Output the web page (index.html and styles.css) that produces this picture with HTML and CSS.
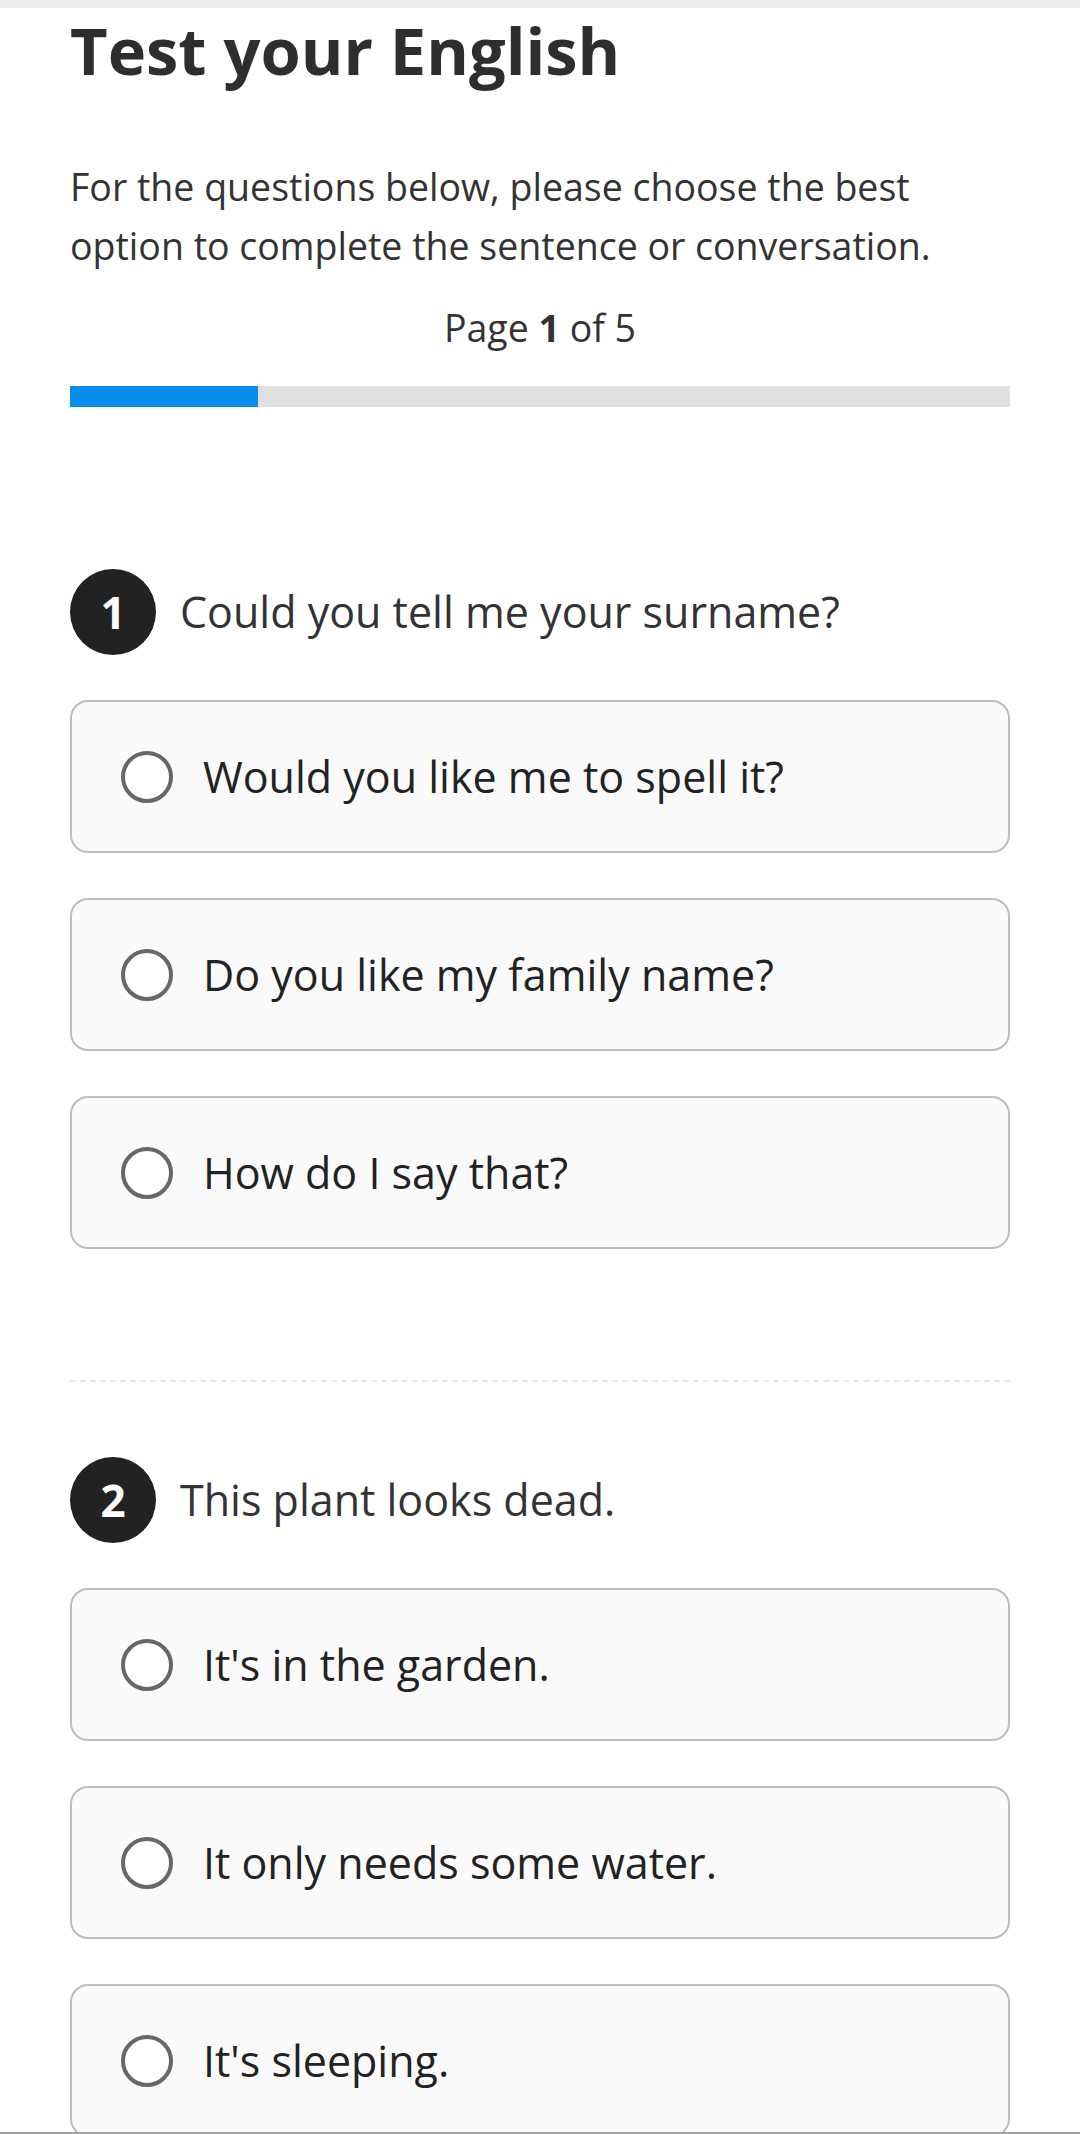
FILE: index.html
```html
<!DOCTYPE html>
<html lang="en">
<head>
<meta charset="utf-8">
<title>Test your English</title>
<link rel="stylesheet" href="styles.css">
</head>
<body>
<div class="topbar"></div>
<main class="page">
  <h1 class="title">Test your English</h1>
  <p class="intro">For the questions below, please choose the best option to complete the sentence or conversation.</p>
  <p class="pager">Page <b>1</b> of 5</p>
  <div class="progress"><div class="progress-fill" style="width:20%"></div></div>

  <section class="question q-first">
    <div class="q-head">
      <span class="q-num">1</span>
      <span class="q-text">Could you tell me your surname?</span>
    </div>
    <div class="options">
      <label class="option"><span class="radio"></span><span class="opt-text">Would you like me to spell it?</span></label>
      <label class="option"><span class="radio"></span><span class="opt-text">Do you like my family name?</span></label>
      <label class="option"><span class="radio"></span><span class="opt-text">How do I say that?</span></label>
    </div>
  </section>

  <hr class="divider">

  <section class="question q-second">
    <div class="q-head">
      <span class="q-num">2</span>
      <span class="q-text">This plant looks dead.</span>
    </div>
    <div class="options">
      <label class="option"><span class="radio"></span><span class="opt-text">It's in the garden.</span></label>
      <label class="option"><span class="radio"></span><span class="opt-text">It only needs some water.</span></label>
      <label class="option"><span class="radio"></span><span class="opt-text">It's sleeping.</span></label>
    </div>
  </section>
</main>
<div class="bottom-edge"></div>
</body>
</html>
```

FILE: styles.css
```css
* { box-sizing: border-box; }

html, body {
  margin: 0;
  padding: 0;
  background: #ffffff;
}

body {
  font-family: "Open Sans", "Noto Sans", "Liberation Sans", sans-serif;
  color: #333333;
}

.topbar {
  height: 8px;
  background: #ececec;
}

.page {
  padding: 0 70px;
}

.title {
  margin: 6px 0 0;
  font-size: 65px;
  line-height: 72px;
  font-weight: 700;
  color: #2e2e2e;
}

.intro {
  margin: 71px 0 0;
  font-size: 37.5px;
  line-height: 59px;
  color: #333333;
}

.pager {
  margin: 28px 0 0;
  font-size: 37.5px;
  line-height: 50px;
  text-align: center;
  color: #333333;
}

.pager b {
  font-weight: 700;
}

.progress {
  margin-top: 33px;
  height: 21px;
  background: #e0e0e0;
}

.progress-fill {
  height: 100%;
  background: #0a8eed;
}

.q-first {
  margin-top: 162px;
}

.q-head {
  display: flex;
  align-items: center;
  gap: 24px;
}

.q-num {
  flex: 0 0 86px;
  width: 86px;
  height: 86px;
  border-radius: 50%;
  background: #222222;
  color: #ffffff;
  font-weight: 700;
  font-size: 44px;
  display: flex;
  align-items: center;
  justify-content: center;
}

.q-text {
  font-size: 43px;
  line-height: 58px;
  color: #333333;
}

.options {
  margin-top: 45px;
  display: flex;
  flex-direction: column;
  gap: 45px;
}

.option {
  height: 153px;
  border: 2px solid #bdbdbd;
  border-radius: 18px;
  background: #fafafa;
  display: flex;
  align-items: center;
  padding-left: 49px;
  gap: 30px;
}

.radio {
  flex: 0 0 52px;
  width: 52px;
  height: 52px;
  border-radius: 50%;
  border: 4px solid #676767;
  background: #ffffff;
}

.opt-text {
  font-size: 43px;
  line-height: 58px;
  color: #222222;
}

.divider {
  margin: 131px 0 0;
  border: 0;
  border-top: 2px dashed #e6e6e6;
  height: 0;
}

.q-second {
  margin-top: 75px;
}

.bottom-edge {
  position: fixed;
  left: 0;
  right: 0;
  bottom: 0;
  height: 2px;
  background: #a0a0a0;
}
```
